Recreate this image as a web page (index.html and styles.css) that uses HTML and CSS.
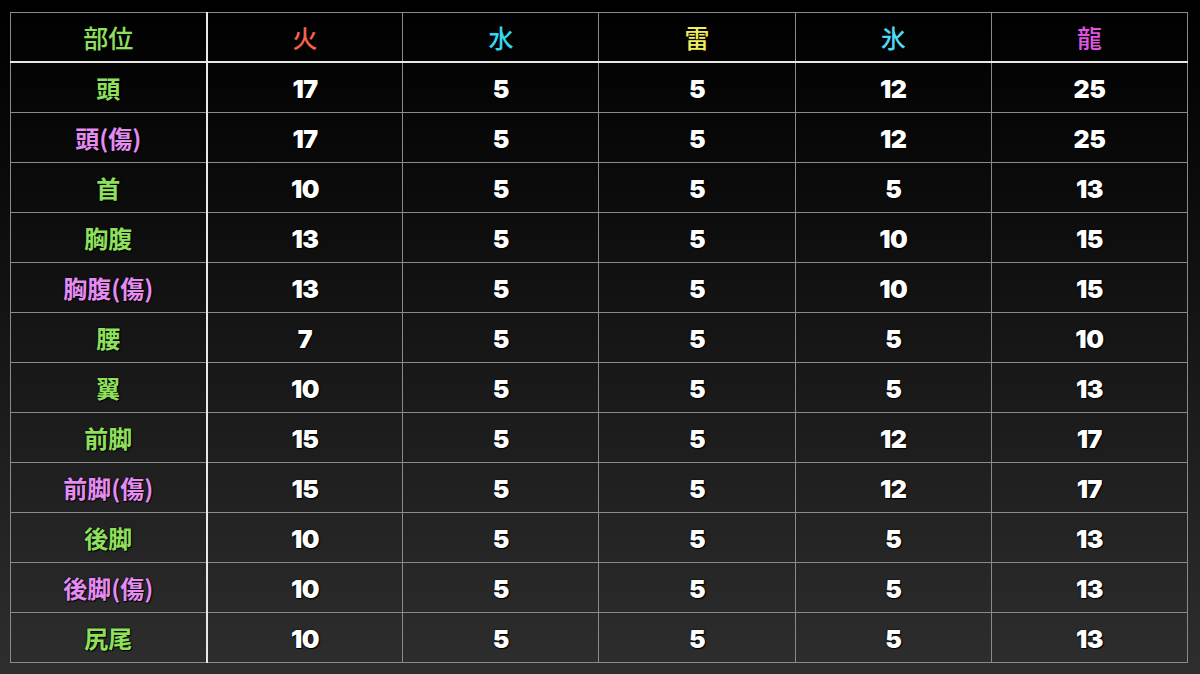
FILE: index.html
```html
<!DOCTYPE html>
<html lang="ja">
<head>
<meta charset="utf-8">
<link rel="stylesheet" href="styles.css">
</head>
<body>
<div class="page">
<table class="grid">
<thead>
<tr>
<th class="lbl green">部位</th>
<th class="fire">火</th>
<th class="water">水</th>
<th class="thunder">雷</th>
<th class="ice">氷</th>
<th class="dragon">龍</th>
</tr>
</thead>
<tbody>
<tr><td class="lbl green">頭</td><td>17</td><td>5</td><td>5</td><td>12</td><td>25</td></tr>
<tr><td class="lbl pink">頭(傷)</td><td>17</td><td>5</td><td>5</td><td>12</td><td>25</td></tr>
<tr><td class="lbl green">首</td><td>10</td><td>5</td><td>5</td><td>5</td><td>13</td></tr>
<tr><td class="lbl green">胸腹</td><td>13</td><td>5</td><td>5</td><td>10</td><td>15</td></tr>
<tr><td class="lbl pink">胸腹(傷)</td><td>13</td><td>5</td><td>5</td><td>10</td><td>15</td></tr>
<tr><td class="lbl green">腰</td><td>7</td><td>5</td><td>5</td><td>5</td><td>10</td></tr>
<tr><td class="lbl green">翼</td><td>10</td><td>5</td><td>5</td><td>5</td><td>13</td></tr>
<tr><td class="lbl green">前脚</td><td>15</td><td>5</td><td>5</td><td>12</td><td>17</td></tr>
<tr><td class="lbl pink">前脚(傷)</td><td>15</td><td>5</td><td>5</td><td>12</td><td>17</td></tr>
<tr><td class="lbl green">後脚</td><td>10</td><td>5</td><td>5</td><td>5</td><td>13</td></tr>
<tr><td class="lbl pink">後脚(傷)</td><td>10</td><td>5</td><td>5</td><td>5</td><td>13</td></tr>
<tr><td class="lbl green">尻尾</td><td>10</td><td>5</td><td>5</td><td>5</td><td>13</td></tr>
</tbody>
</table>
</div>
</body>
</html>
```
FILE: styles.css
```css
html, body {
  margin: 0;
  padding: 0;
  width: 1200px;
  height: 674px;
  overflow: hidden;
}
body {
  background: linear-gradient(to bottom, #000000 0%, #0c0c0c 30%, #222222 75%, #2e2e2e 100%);
}
.page {
  padding: 12px 0 0 10px;
}
.grid {
  border-collapse: collapse;
  width: 1178px;
  table-layout: fixed;
  border: 1px solid #9a9a9a;
}
.grid th, .grid td {
  border: 1px solid #8a8a8a;
  height: 49px;
  padding: 0;
  text-align: center;
  vertical-align: middle;
}
.grid thead th {
  border-bottom: 2px solid #e8e8e8;
  font-family: "Noto Sans CJK JP", sans-serif;
  font-weight: 500;
  font-size: 25px;
  height: 48px;
}
.grid td {
  font-family: "Inter", "Liberation Sans", sans-serif;
  font-weight: 900;
  font-size: 25px;
  color: #ffffff;
  text-shadow: 0 0 2px #000, 1px 1px 1px #000;
  letter-spacing: -0.5px;
  height: 46px;
  padding-top: 3px;
}
.grid td.lbl {
  border-right: 2px solid #e8e8e8;
  font-family: "Noto Sans CJK JP", sans-serif;
  font-weight: 700;
  font-size: 24px;
  letter-spacing: 0;
  height: 49px;
  padding-top: 0;
}
.grid th.lbl {
  border-right: 2px solid #e8e8e8;
}
.green { color: #8fe05c !important; }
.pink { color: #e58cf2 !important; }
.fire { color: #f4624c; }
.water { color: #36d6ef; }
.thunder { color: #f2ee5a; }
.ice { color: #4fd9f2; }
.dragon { color: #df55e2; }
```
